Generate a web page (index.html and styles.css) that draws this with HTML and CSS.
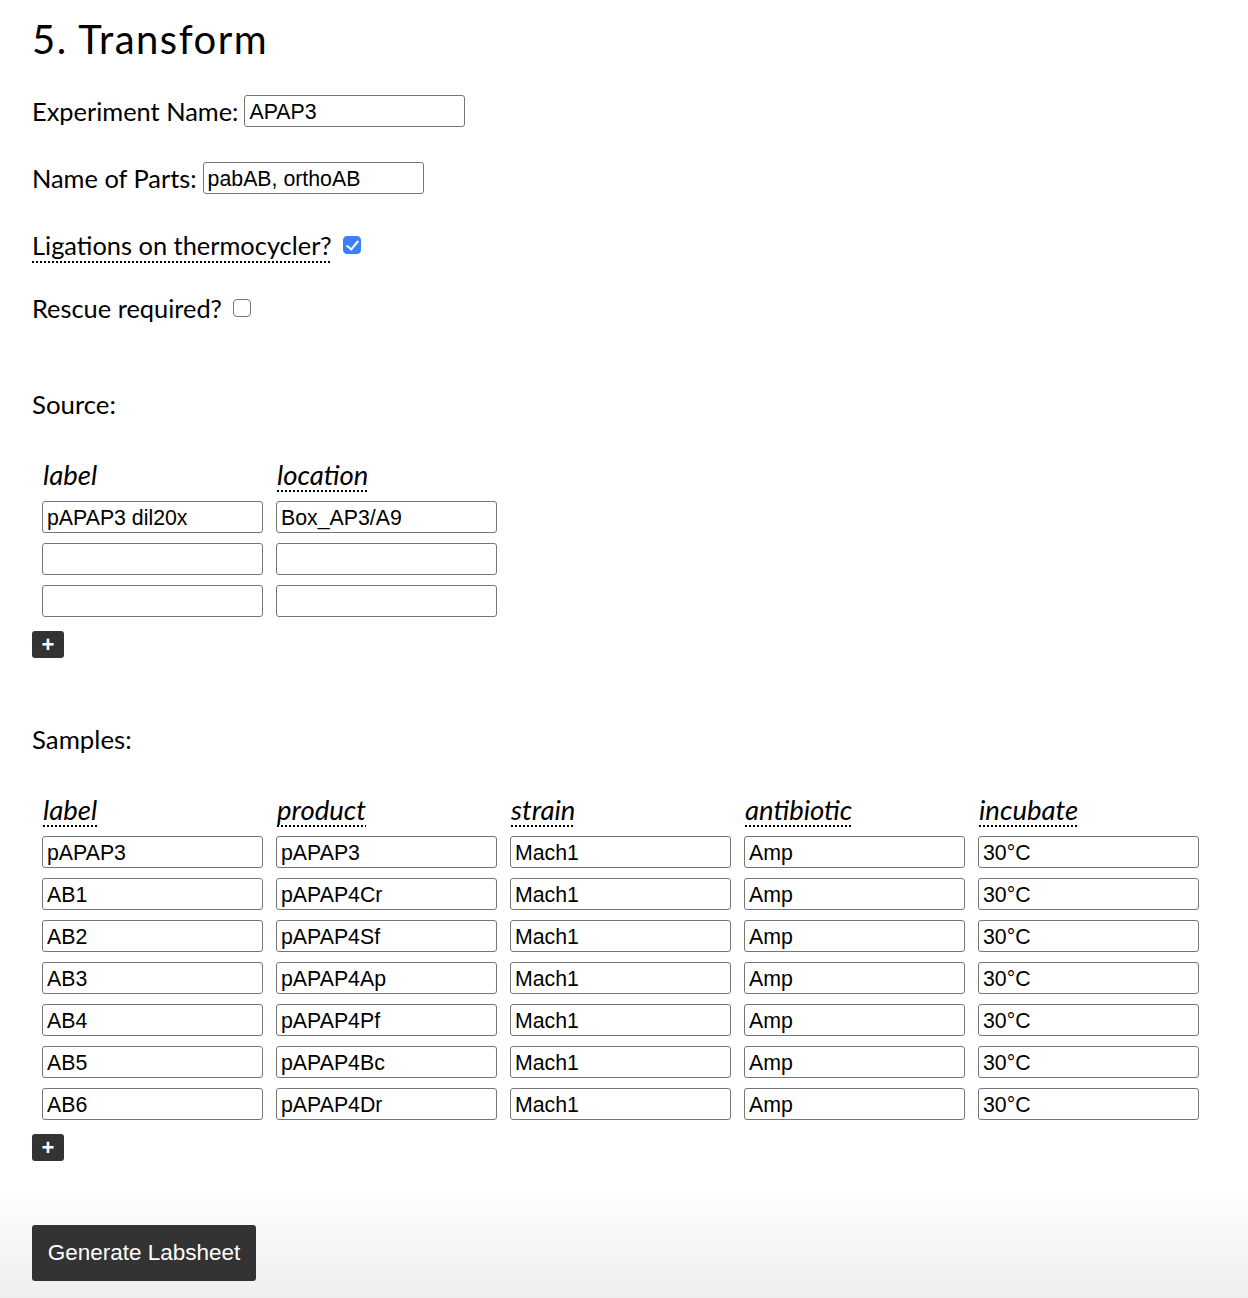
FILE: index.html
```html
<!DOCTYPE html>
<html>
<head>
<meta charset="utf-8">
<link rel="stylesheet" href="styles.css">
</head>
<body>
<main class="page">
  <h1 class="title">5. Transform</h1>

  <div class="field">
    <label class="lbl">Experiment Name:</label>
    <input class="txt" type="text" value="APAP3">
  </div>
  <div class="field">
    <label class="lbl">Name of Parts:</label>
    <input class="txt" type="text" value="pabAB, orthoAB">
  </div>
  <div class="field check-field tight">
    <abbr class="lbl dotted" title="">Ligations on thermocycler?</abbr>
    <input class="cb" type="checkbox" checked>
  </div>
  <div class="field check-field last">
    <label class="lbl">Rescue required?</label>
    <input class="cb" type="checkbox">
  </div>

  <h2 class="section">Source:</h2>
  <div class="grid cols2">
    <div class="hd"><span>label</span></div>
    <div class="hd"><span class="dotted">location</span></div>
    <input class="cell" type="text" value="pAPAP3 dil20x">
    <input class="cell" type="text" value="Box_AP3/A9">
    <input class="cell" type="text" value="">
    <input class="cell" type="text" value="">
    <input class="cell" type="text" value="">
    <input class="cell" type="text" value="">
  </div>
  <button class="add">+</button>

  <h2 class="section samples">Samples:</h2>
  <div class="grid cols5">
    <div class="hd"><span class="dotted">label</span></div>
    <div class="hd"><span class="dotted">product</span></div>
    <div class="hd"><span class="dotted">strain</span></div>
    <div class="hd"><span class="dotted">antibiotic</span></div>
    <div class="hd"><span class="dotted">incubate</span></div>

    <input class="cell" type="text" value="pAPAP3">
    <input class="cell" type="text" value="pAPAP3">
    <input class="cell" type="text" value="Mach1">
    <input class="cell" type="text" value="Amp">
    <input class="cell" type="text" value="30°C">

    <input class="cell" type="text" value="AB1">
    <input class="cell" type="text" value="pAPAP4Cr">
    <input class="cell" type="text" value="Mach1">
    <input class="cell" type="text" value="Amp">
    <input class="cell" type="text" value="30°C">

    <input class="cell" type="text" value="AB2">
    <input class="cell" type="text" value="pAPAP4Sf">
    <input class="cell" type="text" value="Mach1">
    <input class="cell" type="text" value="Amp">
    <input class="cell" type="text" value="30°C">

    <input class="cell" type="text" value="AB3">
    <input class="cell" type="text" value="pAPAP4Ap">
    <input class="cell" type="text" value="Mach1">
    <input class="cell" type="text" value="Amp">
    <input class="cell" type="text" value="30°C">

    <input class="cell" type="text" value="AB4">
    <input class="cell" type="text" value="pAPAP4Pf">
    <input class="cell" type="text" value="Mach1">
    <input class="cell" type="text" value="Amp">
    <input class="cell" type="text" value="30°C">

    <input class="cell" type="text" value="AB5">
    <input class="cell" type="text" value="pAPAP4Bc">
    <input class="cell" type="text" value="Mach1">
    <input class="cell" type="text" value="Amp">
    <input class="cell" type="text" value="30°C">

    <input class="cell" type="text" value="AB6">
    <input class="cell" type="text" value="pAPAP4Dr">
    <input class="cell" type="text" value="Mach1">
    <input class="cell" type="text" value="Amp">
    <input class="cell" type="text" value="30°C">
  </div>
  <button class="add">+</button>

  <div class="actions">
    <button class="generate">Generate Labsheet</button>
  </div>
</main>
</body>
</html>
```
FILE: styles.css
```css
html {
  min-height: 100%;
  background: linear-gradient(to bottom, #ffffff 0, #ffffff calc(100% - 110px), #eeeeee 100%);
}
body {
  margin: 0;
  min-height: 1298px;
  font-family: Lato, "Open Sans", sans-serif;
  color: #000;
}
.page {
  padding: 14px 32px 18px 32px;
}
.title {
  font-family: Lato, sans-serif;
  font-weight: 400;
  font-size: 40px;
  letter-spacing: 1.5px;
  margin: 0 0 30px 0;
  line-height: 50px;
}
.field {
  display: flex;
  align-items: center;
  gap: 6px;
  height: 34px;
  margin-bottom: 33px;
}
.field.tight { margin-bottom: 29px; }
.field.last { margin-bottom: 0; }
.lbl {
  font-size: 25.4px;
  line-height: 30px;
}
.dotted {
  text-decoration: underline dotted;
  text-underline-offset: 6px;
  text-decoration-thickness: 2px;
}
abbr.lbl { text-decoration-line: underline; }
.txt, .cell {
  box-sizing: border-box;
  font-family: "Liberation Sans", Arial, sans-serif;
  font-size: 21.3px;
  color: #000;
  border: 1.5px solid #767676;
  border-radius: 3px;
  padding: 2px 4px 0 4px;
  background: #fff;
  outline: none;
}
.txt {
  width: 221px;
  height: 32px;
}
.check-field { gap: 11px; }
.cb {
  appearance: none;
  -webkit-appearance: none;
  box-sizing: border-box;
  width: 18px;
  height: 18px;
  margin: 0;
  border: 1.5px solid #767676;
  border-radius: 4px;
  background: #fff;
  position: relative;
}
.cb:checked {
  background: #3a80f6;
  border-color: #3a80f6;
}
.cb:checked::after {
  content: "";
  position: absolute;
  left: 5px;
  top: 1px;
  width: 5px;
  height: 10px;
  border: solid #fff;
  border-width: 0 2.5px 2.5px 0;
  transform: rotate(40deg);
}
.section {
  font-size: 25.8px;
  font-weight: 400;
  line-height: 30px;
  margin: 0;
  padding-top: 64px;
}
.samples { padding-top: 66px; }
.grid {
  display: grid;
  column-gap: 13px;
  row-gap: 10px;
  padding-left: 10px;
  margin-top: 42px;
}
.cols2 { grid-template-columns: repeat(2, 221px); }
.cols5 { grid-template-columns: repeat(5, 221px); }
.hd {
  font-style: italic;
  font-size: 27.5px;
  line-height: 28px;
  padding-left: 1px;
  height: 30px;
}
.hd .dotted { text-underline-offset: 5px; }
.cell {
  width: 221px;
  height: 32px;
}
.add {
  margin-top: 14px;
  width: 32px;
  height: 27px;
  background: #333;
  color: #fff;
  border: none;
  border-radius: 3px;
  font-family: "Liberation Sans", Arial, sans-serif;
  font-size: 22px;
  font-weight: 700;
  line-height: 27px;
  padding: 0;
  display: block;
}
.actions {
  margin-top: 64px;
}
.generate {
  background: #333;
  color: #fff;
  border: none;
  border-radius: 3px;
  font-family: "Liberation Sans", Arial, sans-serif;
  font-size: 22.5px;
  width: 224px;
  height: 56px;
  padding: 0;
}
```
